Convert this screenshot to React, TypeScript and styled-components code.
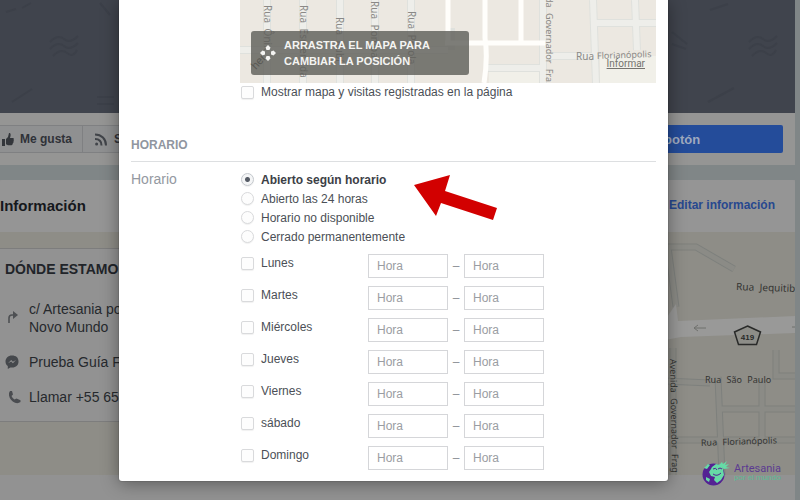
import React from 'react';
import styled, { createGlobalStyle, css } from 'styled-components';

const GlobalStyle = createGlobalStyle`
  *, *::before, *::after { box-sizing: border-box; }
  body {
    margin: 0;
    background: #919191;
    font-family: "Liberation Sans", Arial, sans-serif;
    font-size: 12px;
    color: #4b4f56;
  }
  button, input { font: inherit; color: inherit; }
`;

const Screen = styled.div`
  position: relative;
  min-height: 100vh;
  overflow: hidden;
`;

/* ---------- dimmed page ---------- */

const Page = styled.div`
  min-height: 100vh;
  padding-right: 5px;
  background: linear-gradient(#808687, #808687) right / 5px 100% no-repeat, #929292;
`;

const Cover = styled.div`
  height: 113px;
  background: #40444d;
  overflow: hidden;
  svg { display: block; width: 100%; height: 113px; }
`;

const ActionBar = styled.div`
  display: flex;
  justify-content: space-between;
  padding: 12px 12px 12px 0;
  background: #959594;
`;

const ButtonGroup = styled.div`
  display: flex;
`;

const PageButton = styled.button`
  display: flex;
  align-items: center;
  gap: 6px;
  height: 28px;
  padding: 0 10px 0 2px;
  border: 1px solid #7f8082;
  border-left: 0;
  background: #8f9091;
  color: #2f3238;
  font-weight: bold;
  white-space: nowrap;
  & + & { padding-left: 12px; }
  svg { flex: none; }
`;

const PrimaryButton = styled.button`
  width: 170px;
  height: 28px;
  padding: 0 0 0 51px;
  border: 0;
  border-radius: 2px;
  background: #244c9a;
  color: #9fa9bf;
  font-size: 13px;
  font-weight: bold;
  text-align: left;
`;

const Band = styled.div`
  height: 15px;
  background: #808687;
`;

const InfoHeader = styled.header`
  display: flex;
  align-items: center;
  justify-content: space-between;
  height: 52px;
  padding: 0 20px 2px 0;
  border-radius: 2px 2px 0 0;
  background: #959595;
`;

const InfoTitle = styled.h2`
  margin: 0;
  font-size: 15px;
  color: #15181c;
`;

const EditLink = styled.a`
  color: #27488f;
  font-weight: bold;
  text-decoration: none;
`;

const MapPanel = styled.section`
  position: relative;
  padding: 16px 0 53px;
  background: #8e8d87;
`;

const PanelMap = styled.svg`
  position: absolute;
  inset: 0;
  width: 100%;
  height: 100%;
`;

const AddressCard = styled.div`
  position: relative;
  width: 40%;
  padding: 12px 5px 15px;
  border: 1px solid #7d7d7d;
  border-left: 0;
  background: #929292;
  color: #26292d;
`;

const AddressTitle = styled.h3`
  margin: 0 0 23px;
  font-size: 14px;
  line-height: 16px;
  color: #212429;
`;

const AddressRow = styled.div`
  display: grid;
  grid-template-columns: 16px 1fr;
  gap: 8px;
  align-items: center;
  margin-bottom: 17px;
  font-size: 14px;
  line-height: 18px;
  white-space: nowrap;
  &:last-child { margin-bottom: 0; }
`;

/* ---------- dialog ---------- */

const Overlay = styled.div`
  position: absolute;
  inset: 0;
  padding: 0 132px 0 119px;
`;

const Dialog = styled.form`
  padding: 0 12px 11px;
  border-radius: 0 0 3px 3px;
  background: #fff;
  box-shadow: 0 2px 18px rgba(0, 0, 0, 0.4), 0 0 0 1px rgba(0, 0, 0, 0.08);
`;

const Columns = styled.div`
  display: grid;
  grid-template-columns: 109px 1fr;
`;

const DialogMap = styled.div`
  position: relative;
  height: 83px;
  background: #ece8e1;
  overflow: hidden;
  > svg { display: block; width: 100%; height: 83px; }
`;

const DragHint = styled.button`
  position: absolute;
  left: 11px;
  top: 31px;
  display: flex;
  align-items: center;
  gap: 8px;
  width: 218px;
  height: 44px;
  padding: 0 9px;
  border: 0;
  border-radius: 3px;
  background: rgba(92, 92, 88, 0.8);
  color: #f4f4f2;
  font-size: 11px;
  font-weight: bold;
  line-height: 16px;
  text-align: left;
`;

const ReportLink = styled.a`
  position: absolute;
  right: 11px;
  bottom: 13px;
  color: #74736f;
  font-family: Roboto, sans-serif;
  font-size: 10px;
  line-height: 12px;
`;

const Choice = styled.label<{ $strong?: boolean; $compact?: boolean }>`
  display: flex;
  align-items: center;
  gap: 7px;
  height: ${p => (p.$compact ? 18 : 19)}px;
  padding-left: 1px;
  font-weight: ${p => (p.$strong ? 'bold' : 'normal')};
  white-space: nowrap;
  ${p => p.$strong && css`color: #3c4046;`}
`;

const Mark = styled.input`
  appearance: none;
  flex: none;
  width: 13px;
  height: 13px;
  margin: 0;
  border: 1px solid #d9dadc;
  border-radius: 2px;
  background: #fdfdfd;
  box-shadow: 0 1px 1px rgba(0, 0, 0, 0.06);
  &[type='radio'] { border-radius: 50%; }
  &[type='radio']:checked {
    border-color: #c4c8cd;
    background: radial-gradient(circle, #565c66 0 2px, #f4f5f6 3px);
  }
`;

const SectionTitle = styled.h2`
  margin: 36px 0 8px;
  padding-bottom: 8px;
  border-bottom: 1px solid #dddfe1;
  color: #9096a0;
  font-size: 12px;
  line-height: 16px;
`;

const FieldName = styled.div`
  color: #9499a1;
  font-size: 14px;
  line-height: 18px;
`;

const Options = styled.div`
  padding-bottom: 8px;
`;

const Day = styled.div`
  display: grid;
  grid-template-columns: 128px 80px 16px 80px;
  align-items: start;
  height: 24px;
  margin-bottom: 8px;
  &:last-child { margin-bottom: 0; }
`;

const TimeInput = styled.input`
  width: 80px;
  height: 24px;
  padding: 0 8px;
  border: 1px solid #d5d6d9;
  border-radius: 0;
  background: #fff;
  &::placeholder { color: #9a9da2; opacity: 1; }
`;

const Dash = styled.span`
  color: #8c9096;
  line-height: 24px;
  text-align: center;
`;

const FieldArea = styled.div`
  position: relative;
`;

const Pointer = styled.svg`
  position: absolute;
  left: 174px;
  top: 4px;
`;

const Brand = styled.div`
  position: absolute;
  right: 19px;
  bottom: 14px;
  display: flex;
  align-items: center;
  gap: 2px;
`;

const BrandText = styled.div`
  display: grid;
  color: #5b3a91;
  font-family: Roboto, sans-serif;
  font-size: 11px;
  line-height: 11px;
`;

const BrandSub = styled.span`
  color: #5dbb94;
  font-size: 8px;
  line-height: 8px;
`;

/* ---------- drawings ---------- */

const mapFont = { fontFamily: '"Noto Sans", sans-serif', fontSize: 10 };

const CoverPattern = () => (
  <svg viewBox="0 0 795 113" preserveAspectRatio="none" aria-hidden="true" fill="none" stroke="#3c4049" strokeWidth="2">
    {[[50, 34], [749, 34]].map(([x, y]) => (
      <path key={x} d={`M${x} ${y + 8}q8-8 14-3t14-3M${x} ${y + 15}q8-8 14-3t14-3M${x + 3} ${y + 22}q8-8 14-3t10-3`} />
    ))}
    <path d="M6 12l10-3M22 8l9-5M100 3l10 12M12 102l20-13M97 97h17M97 104h17M710 10l18-6M708 102l26-14M672 32l15 12M672 44l14 5" />
  </svg>
);

const Thumb = () => (
  <svg width="12" height="13" viewBox="0 0 12 13" fill="#33363b" aria-hidden="true">
    <path d="M0 6h3v7H0zM4 6l2-2 1-4c2 0 2 2 1 5h3c1 0 1 1 .6 2 .4.5.3 1.300-.2 1.700.2.600 0 1.300-.6 1.600 0 1.500-.8 2-2 2H6l-2-1z" />
  </svg>
);

const Feed = () => (
  <svg width="13" height="13" viewBox="0 0 13 13" fill="none" stroke="#414449" strokeWidth="2" aria-hidden="true">
    <path d="M0 1.500c6.500 0 11 4.500 11 11M0 6c4 0 6.500 2.500 6.500 6.500" />
    <circle cx="1.600" cy="11" r="1.500" fill="#414449" stroke="none" />
  </svg>
);

const Turn = () => (
  <svg width="14" height="14" viewBox="0 0 14 14" aria-hidden="true">
    <path d="M4 12V7q0-3 3-3h3" fill="none" stroke="#4e5053" strokeWidth="1.600" />
    <path d="M8 0l5 4-5 4z" fill="#4e5053" />
  </svg>
);

const Messenger = () => (
  <svg width="14" height="14" viewBox="0 0 14 14" aria-hidden="true">
    <path d="M7 .5C3 .5.5 3.200.5 6.500c0 2 .9 3.500 2.300 4.600V14l2.500-1.600C10.500 13.300 13.500 10.500 13.500 6.500S11 .5 7 .5z" fill="#45484c" />
    <path d="M3 8.300l3.200-3.400 1.700 1.800L11 5 7.900 8.300 6.200 6.600z" fill="#929292" />
  </svg>
);

const Phone = () => (
  <svg width="16" height="14" viewBox="0 0 16 14" aria-hidden="true">
    <path d="M5 1l2 0 1 3.500-1.500 1.500q1 2.500 3 3.500L11.500 8.500l4 1.700v1.900Q13 14 10 12.800 5 10.500 4 5.500 3.500 2.500 5 1z" fill="#4a4c50" />
  </svg>
);

const PlaceMap = () => (
  <svg viewBox="0 0 416 83" preserveAspectRatio="xMinYMin slice" aria-label="Mapa">
    <path d="M249 68h54v15h-54zM360 56h56v27h-56z" fill="#f1f0e9" />
    <g fill="none" stroke="#dfe1dd" strokeWidth="8">
      <path d="M27 0v83M63 0v83M100 0v83M135 0v83M171 0v83M303 0v83M353 0l3 83M395 0l2 50M356 23h60M0 50h208M245 68h58M306 56h50M211 28v22" />
    </g>
    <g fill="none" stroke="#eeeeea" strokeWidth="6">
      <path d="M27 0v83M63 0v83M100 0v83M135 0v83M171 0v83M303 0v83M353 0l3 83M395 0l2 50M356 23h60M0 50h208M245 68h58M306 56h50" />
    </g>
    <path d="M208 0v43M245 0v38q3 20-1 45M281 0v42M205 43h100" fill="none" stroke="#fffefb" strokeWidth="5" />
    <g fill="#8a8986" style={mapFont} wordSpacing="3">
      <text transform="translate(24 5) rotate(90)">Rua Ônix</text>
      <text transform="translate(60 5) rotate(90)">Rua Esmeralda</text>
      <text transform="translate(96 17) rotate(90)">Rua Rubí</text>
      <text transform="translate(131 1) rotate(90)">Rua Pomba</text>
      <text transform="translate(168 11) rotate(90)">Rua Pérola</text>
      <text transform="translate(306 82) rotate(90)" textAnchor="end" fontSize="9" style={{ fontSize: 9 }}>da Governador Fra</text>
      <text x="336" y="60">Rua</text>
      <text x="357" y="59" transform="rotate(-2 357 59)" style={{ fontSize: 9 }}>Florianópolis</text>
    </g>
    <text transform="translate(16 70) rotate(-48)" fill="#454540" fontSize="11">her</text>
  </svg>
);

const BackMap = () => (
  <PanelMap viewBox="0 0 795 243" preserveAspectRatio="xMaxYMin slice" aria-hidden="true">
    <g fill="none" stroke="#7e807d" strokeWidth="7">
      <path d="M665 15h31l38 22M668 15l8 60M673 116v127M665 149l45 2M776 118v26h19M718 145l4 98M720 177h75M762 148v61M665 208h130" />
    </g>
    <g fill="none" stroke="#8b8b86" strokeWidth="5">
      <path d="M665 15h31l38 22M668 15l8 60M673 116v127M665 149l45 2M776 118v26h19M718 145l4 98M720 177h75M762 148v61M665 208h130" />
    </g>
    <path d="M665 88l11-16 2 17 117-5v17l-114 4-16 3z" fill="#999998" />
    <path d="M706 96h-12m0 0l4-3m-4 3l4 3M799 95h-7" stroke="#6f706d" fill="none" />
    <path d="M747.500 94l13 6-4 12.500h-18l-4-12.500z" fill="#8d8d88" stroke="#292a29" strokeWidth="1.500" />
    <text x="747.500" y="108" textAnchor="middle" fontWeight="bold" fontSize="8" fill="#292a29">419</text>
    <g fill="#343432" style={mapFont} wordSpacing="3">
      <text x="736" y="58" transform="rotate(2 736 58)">Rua Jequitib</text>
      <text x="705" y="151" style={{ fontSize: 9 }}>Rua São Paulo</text>
      <text x="701" y="214" transform="rotate(-2 701 214)" style={{ fontSize: 9 }}>Rua Florianópolis</text>
      <text transform="translate(670 127) rotate(89)" style={{ fontSize: 9 }}>Avenida Governador Frag</text>
    </g>
  </PanelMap>
);

const RedArrow = () => (
  <Pointer width="84" height="48" viewBox="0 0 84 48" aria-hidden="true">
    <path d="M0 11L36 1l-5 16 52 17-4 12-52-17-5 13z" fill="#d20000" />
  </Pointer>
);

const Globe = () => (
  <svg width="30" height="27" viewBox="0 0 30 27" aria-hidden="true">
    <circle cx="11.500" cy="15.500" r="11" fill="#542293" />
    <path d="M10 8l4-3 5 1 2 4 1 6-3 5-4 3-3-3 1-3-4-1-2-4 2-3z" fill="#66dba6" />
    <path d="M2 9l4-4 2 1-3 4zM4 18l4 2-1 3-3-2z" fill="#66dba6" />
    <path d="M11 10q3-2 4 1m1-1q2-2 4 0M11 15q4 3 8-1" stroke="#542293" fill="none" />
    <path d="M17 6l3-3 1 2 4-3-2 4 4-1-3 3 4 1-6 1z" fill="#66dba6" />
  </svg>
);

const MoveIcon = () => (
  <svg width="16" height="16" viewBox="0 0 16 16" fill="#f4f4f2" aria-hidden="true">
    <path d="M8 0l2.500 2.500L9.500 5h-3l-1-2.500zM8 16l2.500-2.500-1-2.500h-3l-1 2.500zM0 8l2.500-2.500 2.500 1v3l-2.500 1zM16 8l-2.500-2.500-2.500 1v3l2.500 1z" />
  </svg>
);

const schedules = ['Abierto según horario', 'Abierto las 24 horas', 'Horario no disponible', 'Cerrado permanentemente'];
const days = ['Lunes', 'Martes', 'Miércoles', 'Jueves', 'Viernes', 'sábado', 'Domingo'];

export default function App() {
  return (
    <Screen>
      <GlobalStyle />
      <Page>
        <Cover><CoverPattern /></Cover>
        <ActionBar>
          <ButtonGroup>
            <PageButton><Thumb />Me gusta</PageButton>
            <PageButton><Feed />S</PageButton>
          </ButtonGroup>
          <PrimaryButton>botón</PrimaryButton>
        </ActionBar>
        <Band />
        <InfoHeader>
          <InfoTitle>Información</InfoTitle>
          <EditLink href="#editar">Editar información</EditLink>
        </InfoHeader>
        <MapPanel>
          <BackMap />
          <AddressCard>
            <AddressTitle>DÓNDE ESTAMO</AddressTitle>
            <AddressRow><Turn /><span>c/ Artesania po<br />Novo Mundo</span></AddressRow>
            <AddressRow><Messenger /><span>Prueba Guía F</span></AddressRow>
            <AddressRow><Phone /><span>Llamar +55 65</span></AddressRow>
          </AddressCard>
        </MapPanel>
      </Page>

      <Overlay>
        <Dialog>
          <Columns>
            <span />
            <div>
              <DialogMap>
                <PlaceMap />
                <DragHint type="button">
                  <MoveIcon />
                  <span>ARRASTRA EL MAPA PARA<br />CAMBIAR LA POSICIÓN</span>
                </DragHint>
                <ReportLink href="#informar">Informar</ReportLink>
              </DialogMap>
              <Choice $compact><Mark type="checkbox" />Mostrar mapa y visitas registradas en la página</Choice>
            </div>
          </Columns>
          <SectionTitle>HORARIO</SectionTitle>
          <Columns>
            <FieldName>Horario</FieldName>
            <FieldArea>
              <RedArrow />
              <Options role="radiogroup" aria-label="Horario">
                {schedules.map((s, i) => (
                  <Choice key={s} $strong={i === 0}>
                    <Mark type="radio" name="horario" defaultChecked={i === 0} />{s}
                  </Choice>
                ))}
              </Options>
              {days.map(d => (
                <Day key={d}>
                  <Choice $compact><Mark type="checkbox" />{d}</Choice>
                  <TimeInput placeholder="Hora" aria-label={`${d}, apertura`} />
                  <Dash>–</Dash>
                  <TimeInput placeholder="Hora" aria-label={`${d}, cierre`} />
                </Day>
              ))}
            </FieldArea>
          </Columns>
        </Dialog>
      </Overlay>
      <Brand>
        <Globe />
        <BrandText>Artesania<BrandSub>por el mundo</BrandSub></BrandText>
      </Brand>
    </Screen>
  );
}
